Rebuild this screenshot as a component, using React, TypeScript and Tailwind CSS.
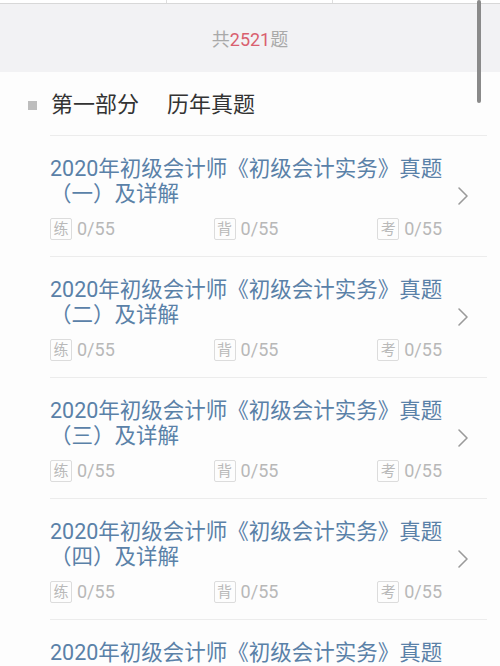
import React from 'react'

const FONT = 'Roboto, "Noto Sans CJK SC", "Noto Sans", sans-serif'

const ITEMS = ['（一）及详解', '（二）及详解', '（三）及详解', '（四）及详解', '（五）及详解']

function Stat({ tag }: { tag: string }) {
  return (
    <div className="flex items-center">
      <span className="flex h-[22px] w-[22px] items-center justify-center rounded-[2px] border border-[#dcdcdc] text-[15px] leading-none text-[#b9b9b9]">
        {tag}
      </span>
      <span className="ml-[5px] text-[18px] leading-none text-[#b8b8b8]">0/55</span>
    </div>
  )
}

function Chevron() {
  return (
    <svg width="12" height="20" viewBox="0 0 12 20" fill="none">
      <path d="M2 2l8 8-8 8" stroke="#9a9a9a" strokeWidth="1.6" strokeLinecap="round" strokeLinejoin="round" />
    </svg>
  )
}

export default function App() {
  return (
    <div className="relative min-h-screen w-full overflow-hidden bg-[#fdfdfd]" style={{ fontFamily: FONT }}>
      {/* tab strip edge */}
      <div className="grid h-[4px] grid-cols-3 border-b border-[#d8d8d8] bg-white">
        <div className="border-r border-[#dedede]" />
        <div className="border-r border-[#dedede]" />
        <div />
      </div>

      {/* total count */}
      <div className="flex h-[68px] items-center justify-center bg-[#f2f2f4] pt-[3px] text-[18px] text-[#a9a9a9]">
        <span>共</span>
        <span className="text-[#d9606e]">2521</span>
        <span>题</span>
      </div>

      {/* section header */}
      <div className="flex h-[63px] items-center pl-[28px] pt-[3px]">
        <span className="h-[9px] w-[9px] bg-[#bdbdbd]" />
        <span className="ml-[14px] text-[22px] leading-none text-[#333333]">第一部分</span>
        <span className="ml-[28px] text-[22px] leading-none text-[#333333]">历年真题</span>
      </div>

      {/* list */}
      <div className="ml-[50px] mr-[13px]">
        {ITEMS.map((sub) => (
          <div key={sub} className="flex h-[121px] items-center border-t border-[#ececec]">
            <div className="flex h-full w-[392px] flex-col pt-[20px]">
              <div className="whitespace-nowrap text-[21.5px] leading-[25px] text-[#5a81a8]">
                <div>2020年初级会计师《初级会计实务》真题</div>
                <div>{sub}</div>
              </div>
              <div className="mt-[12px] flex items-center justify-between">
                <Stat tag="练" />
                <Stat tag="背" />
                <Stat tag="考" />
              </div>
            </div>
            <div className="flex flex-1 items-center justify-center pr-[4px]">
              <Chevron />
            </div>
          </div>
        ))}
      </div>

      {/* scrollbar */}
      <div className="absolute left-[477px] top-0 h-[103px] w-[4px] rounded-full bg-[#8a8a8a]" />
    </div>
  )
}
